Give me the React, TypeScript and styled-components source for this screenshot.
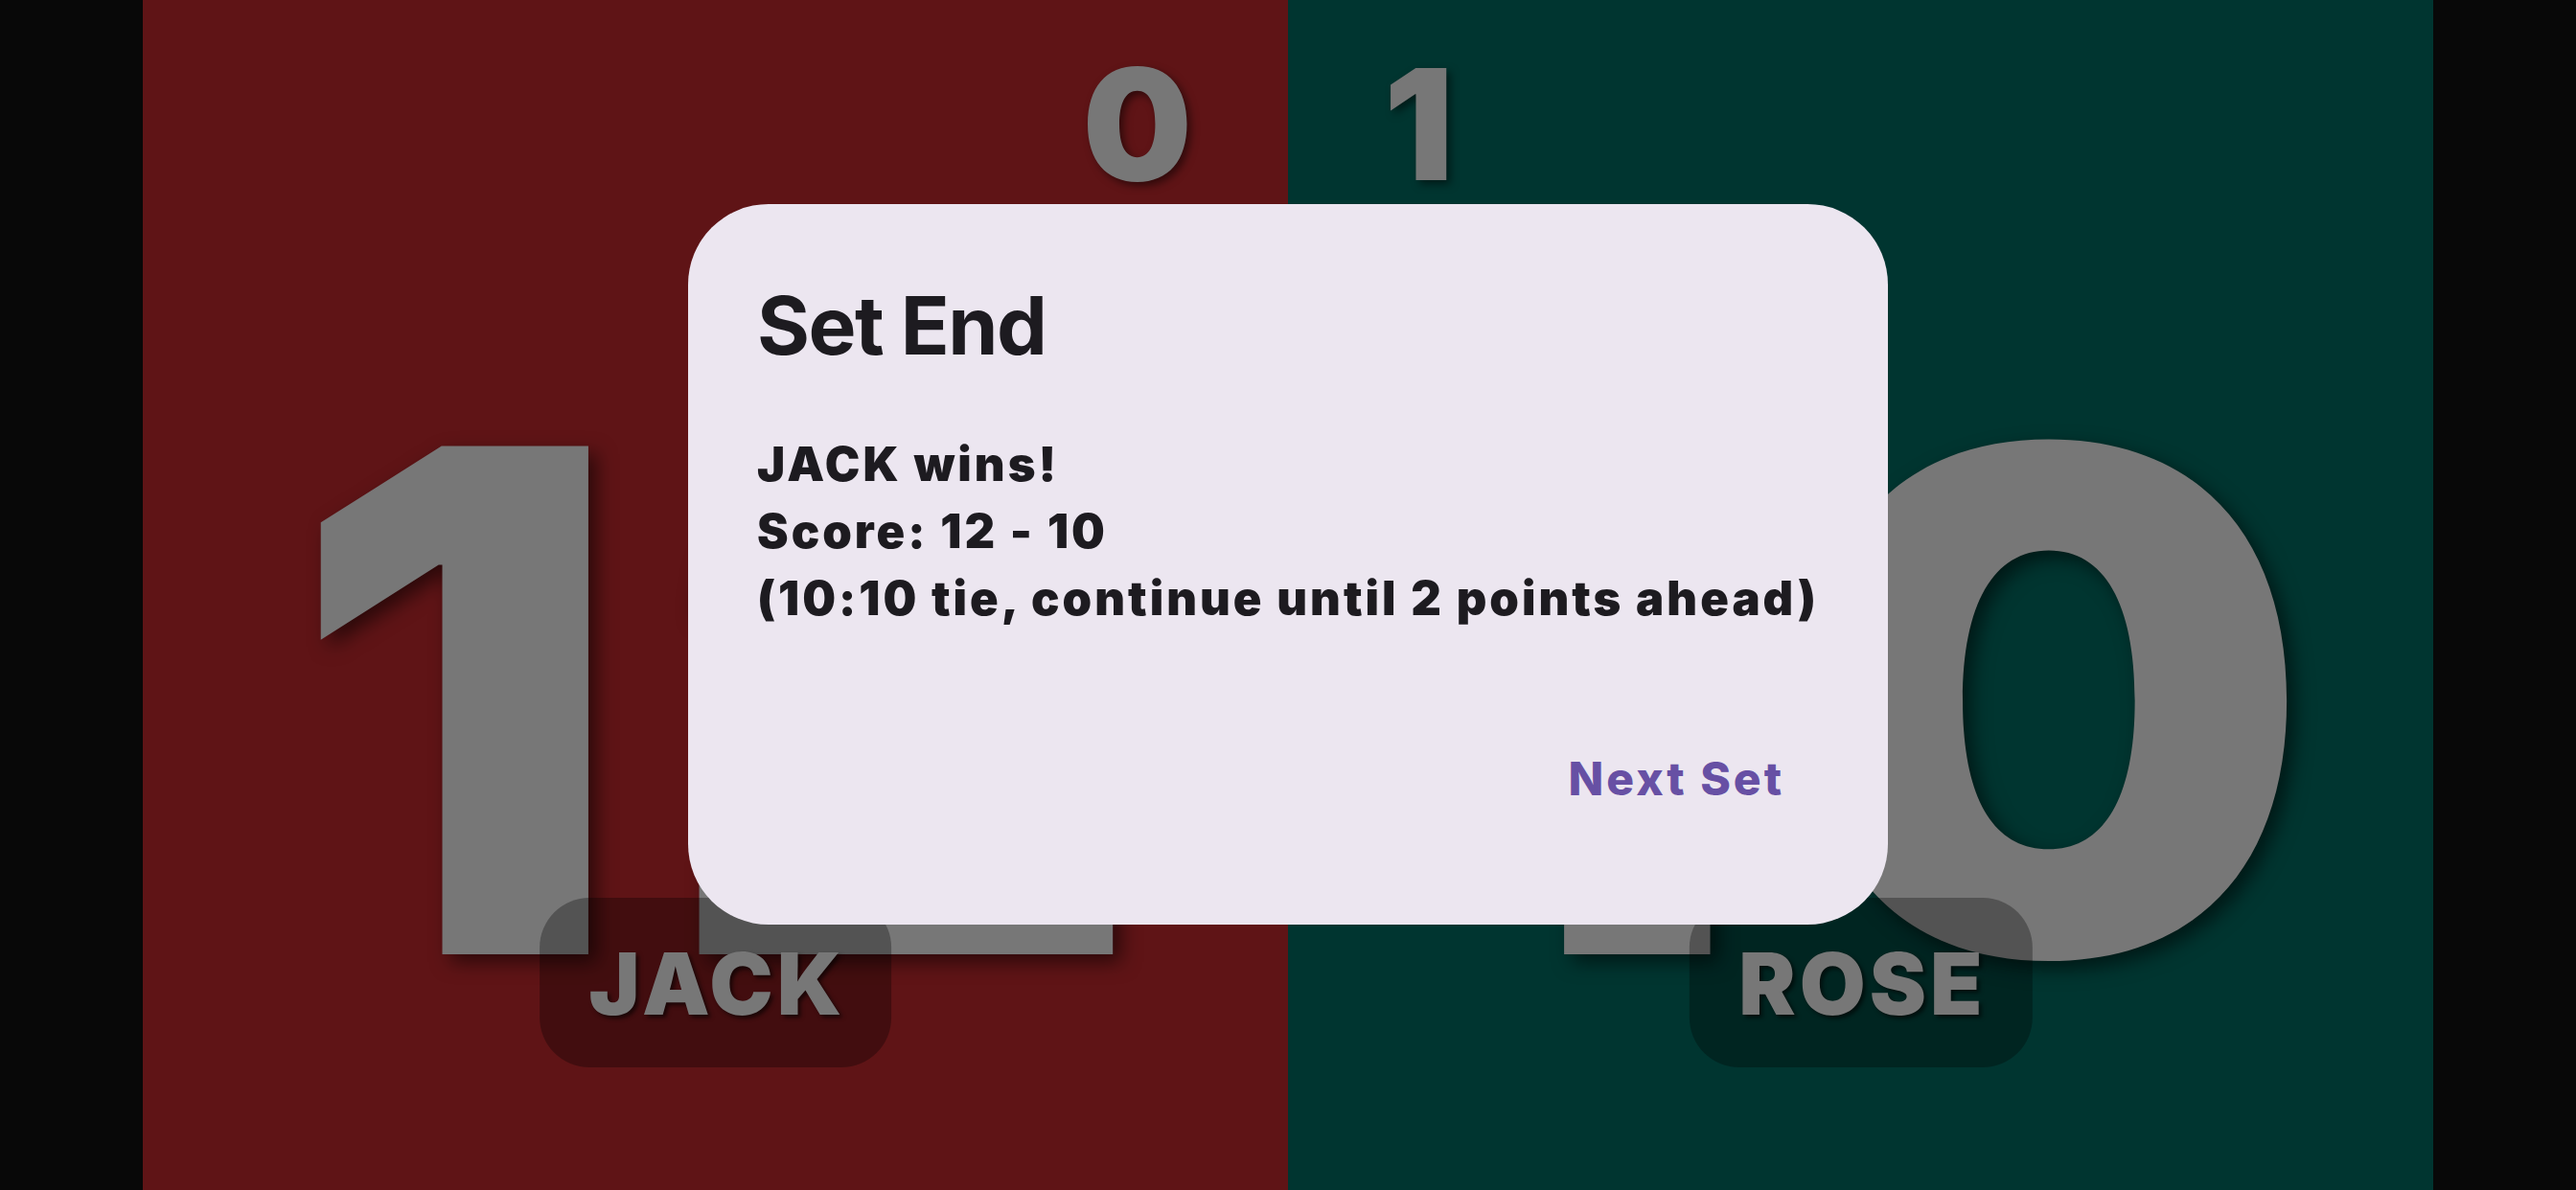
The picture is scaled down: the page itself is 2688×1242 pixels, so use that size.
import React from "react";
import styled, { createGlobalStyle } from "styled-components";

const GlobalStyle = createGlobalStyle`
    html, body {
        margin: 0;
        padding: 0;
        background: #080808;
    }
    body {
        font-family: Inter, "Noto Sans", sans-serif;
    }
`;

const Screen = styled.div`
    position: relative;
    width: 2688px;
    height: 1242px;
    display: flex;
    padding: 0 149px;
    box-sizing: border-box;
    background: #080808;
    overflow: hidden;
`;

const Panel = styled.div<{ $bg: string }>`
    position: relative;
    flex: 1;
    display: flex;
    flex-direction: column;
    align-items: center;
    background: ${p => p.$bg};
`;

const SetRow = styled.div<{ $side: "left" | "right" }>`
    align-self: stretch;
    display: flex;
    justify-content: ${p => (p.$side === "left" ? "flex-end" : "flex-start")};
    padding: 49px 100px 0;
`;

const SetScore = styled.div`
    font-size: 161px;
    font-weight: 900;
    line-height: 1;
    color: #777777;
    text-shadow: 4px 4px 8px rgba(0, 0, 0, 0.5);
`;

// the score font on the device is a little wider than Inter
const BigScore = styled.div`
    margin-top: 157px;
    padding-left: 40px;
    font-size: 729px;
    font-weight: 900;
    line-height: 1;
    letter-spacing: 40px;
    color: #777777;
    transform: scaleX(1.06);
    text-shadow: 8px 8px 20px rgba(0, 0, 0, 0.55);
`;

const NameBadge = styled.div`
    position: absolute;
    bottom: 128px;
    left: 50%;
    transform: translateX(-50%);
    padding: 36px 48px 33px 52px;
    border-radius: 52px;
    background: rgba(0, 0, 0, 0.3);
    font-size: 89px;
    font-weight: 900;
    line-height: 1.21;
    letter-spacing: 4px;
    color: #777777;
    text-shadow: 3px 3px 4px rgba(0, 0, 0, 0.6);
`;

const Overlay = styled.div`
    position: absolute;
    inset: 0;
    display: flex;
    align-items: center;
    justify-content: center;
    padding-bottom: 64px;
`;

const Dialog = styled.div`
    width: 1252px;
    box-sizing: border-box;
    padding: 72px 72px 92px;
    border-radius: 84px;
    background: #ece6f0;
    display: flex;
    flex-direction: column;
`;

const Title = styled.h2`
    margin: 0;
    font-size: 84px;
    font-weight: 700;
    line-height: 110px;
    letter-spacing: -1.5px;
    color: #1d1b20;
`;

const Body = styled.div`
    margin-top: 55px;
    font-size: 49px;
    font-weight: 900;
    line-height: 70px;
    letter-spacing: 3px;
    color: #1d1b20;
`;

const Actions = styled.div`
    margin-top: 93px;
    display: flex;
    justify-content: flex-end;
`;

const TextButton = styled.button`
    height: 120px;
    padding: 0 36px;
    border: none;
    border-radius: 60px;
    background: transparent;
    font-family: inherit;
    font-size: 48px;
    font-weight: 800;
    line-height: 120px;
    letter-spacing: 3px;
    color: #6750a4;
`;

interface SideProps {
    bg: string;
    side: "left" | "right";
    sets: number;
    score: number;
    name: string;
}

function Side(props: SideProps) {
    const { bg, side, sets, score, name } = props;
    return <Panel $bg={bg}>
        <SetRow $side={side}>
            <SetScore>{sets}</SetScore>
        </SetRow>
        <BigScore>{score}</BigScore>
        <NameBadge>{name}</NameBadge>
    </Panel>;
}

export default function App() {
    return <>
        <GlobalStyle />
        <Screen>
            <Side bg="#5f1416" side="left" sets={0} score={12} name="JACK" />
            <Side bg="#003530" side="right" sets={1} score={10} name="ROSE" />
            <Overlay>
                <Dialog>
                    <Title>Set End</Title>
                    <Body>
                        <div>JACK wins!</div>
                        <div>Score: 12 - 10</div>
                        <div>(10:10 tie, continue until 2 points ahead)</div>
                    </Body>
                    <Actions>
                        <TextButton>Next Set</TextButton>
                    </Actions>
                </Dialog>
            </Overlay>
        </Screen>
    </>;
}
